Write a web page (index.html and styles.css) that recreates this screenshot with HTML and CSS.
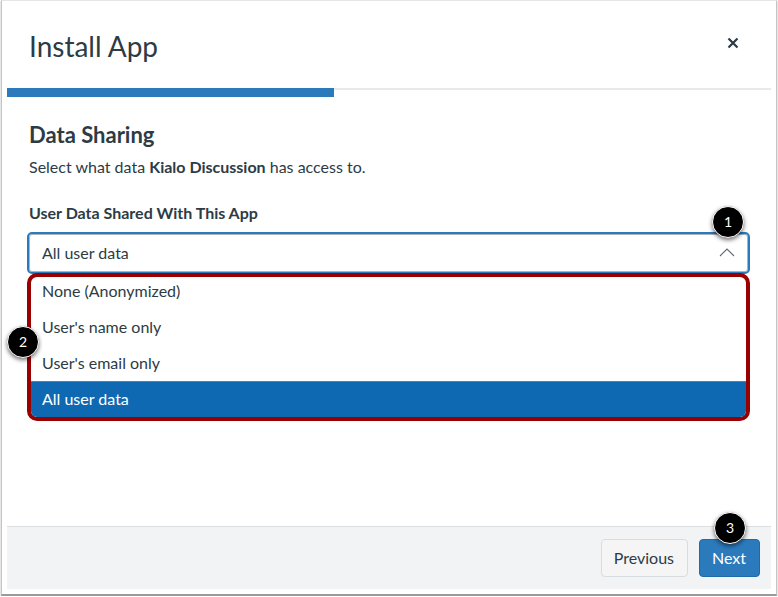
FILE: index.html
```html
<!DOCTYPE html>
<html lang="en">
<head>
    <meta charset="UTF-8">
    <title>Install App</title>
    <link rel="stylesheet" href="styles.css">
</head>
<body>
    <div class="frame">
        <header class="modal-header">
            <h1>Install App</h1>
            <button class="close-btn" aria-label="Close">
                <svg width="12" height="12" viewBox="0 0 12 12"><path d="M1.5 1.5l9 9M10.5 1.5l-9 9" stroke="#2d3b45" stroke-width="2.2" fill="none"/></svg>
            </button>
        </header>
        <div class="progress"><div class="progress-fill"></div></div>

        <main class="content">
            <h2>Data Sharing</h2>
            <p class="intro">Select what data <strong>Kialo Discussion</strong> has access to.</p>
            <label class="field-label">User Data Shared With This App</label>
            <div class="select-box">
                <span>All user data</span>
                <svg width="16" height="9" viewBox="0 0 16 9"><path d="M1 8l7-7 7 7" stroke="#5b6b78" stroke-width="1.1" fill="none"/></svg>
                <span class="badge badge-one">1</span>
            </div>
            <div class="options-wrap">
                <ul class="options">
                    <li>None (Anonymized)</li>
                    <li>User's name only</li>
                    <li>User's email only</li>
                    <li class="selected">All user data</li>
                </ul>
                <span class="badge badge-two">2</span>
            </div>
        </main>

        <footer class="modal-footer">
            <button class="btn">Previous</button>
            <button class="btn btn-primary">Next<span class="badge badge-three">3</span></button>
        </footer>
    </div>
</body>
</html>
```

FILE: styles.css
```css
html, body {
    margin: 0;
    padding: 0;
    background-color: #fff;
}
body {
    font-family: Lato, 'Open Sans', sans-serif;
    color: #2d3b45;
}
.frame {
    box-sizing: border-box;
    width: 776px;
    height: 596px;
    margin-left: 1px;
    padding: 0 5px 5px 5px;
    display: flex;
    flex-direction: column;
    background-color: #fff;
    border: 1px solid #c4c4c4;
    border-top: 1px solid #e6e6e6;
    border-bottom: 2px solid #9a9a9a;
    box-shadow: 0 1px 2px rgba(0, 0, 0, 0.3);
}
.modal-header {
    height: 87px;
    display: flex;
    justify-content: space-between;
    align-items: center;
    padding: 0 32px 0 22px;
    flex-shrink: 0;
}
.modal-header h1 {
    margin: 2px 0 0 0;
    font-size: 28px;
    font-weight: 400;
    line-height: 34px;
}
.close-btn {
    background: none;
    border: none;
    padding: 0;
    display: flex;
    margin-bottom: 4px;
}
.progress {
    height: 9px;
    flex-shrink: 0;
    background: linear-gradient(#e8e9ea 2px, #fff 2px);
}
.progress-fill {
    width: 327px;
    height: 9px;
    background-color: #2b7abc;
}
.content {
    flex: 1;
    padding: 25px 22px 0 20px;
}
.content h2 {
    margin: 0 0 9px 2px;
    font-size: 22px;
    font-weight: 700;
    line-height: 26px;
}
.intro {
    margin: 0 0 26px 2px;
    font-size: 16px;
    line-height: 20px;
}
.field-label {
    display: block;
    margin: 0 0 9px 2px;
    font-size: 16px;
    font-weight: 700;
    line-height: 20px;
}
.select-box {
    box-sizing: border-box;
    position: relative;
    height: 42px;
    margin-right: -1px;
    display: flex;
    justify-content: space-between;
    align-items: center;
    padding: 0 13px 2px 13px;
    font-size: 16px;
    background-color: #fff;
    border: 2px solid #2b7abc;
    border-radius: 5px;
    box-shadow: inset 0 0 0 1px #a9b4bc;
}
.options-wrap {
    position: relative;
    margin: -1px -1px 0 0;
}
.options {
    list-style: none;
    margin: 0;
    padding: 0;
    border: 4px solid #990000;
    border-radius: 10px;
    font-size: 16px;
}
.options li {
    height: 36px;
    line-height: 36px;
    padding-left: 11px;
}
.options li:first-child {
    height: 32px;
    line-height: 28px;
}
.options li.selected {
    background-color: #0f69b2;
    border-top: 1px solid #3d85bf;
    box-sizing: border-box;
    line-height: 34px;
    color: #fff;
    border-radius: 0 0 6px 6px;
}
.badge {
    position: absolute;
    box-sizing: border-box;
    width: 32px;
    height: 32px;
    border-radius: 50%;
    background-color: #000;
    border: 1px solid #fff;
    color: #fff;
    font-size: 14px;
    line-height: 30px;
    text-align: center;
    box-shadow: 0 2px 4px rgba(0, 0, 0, 0.55);
}
.badge-one {
    top: -28px;
    right: 4px;
}
.badge-two {
    top: 53px;
    left: -20px;
}
.badge-three {
    top: -28px;
    left: 14px;
}
.modal-footer {
    box-sizing: border-box;
    height: 63px;
    flex-shrink: 0;
    display: flex;
    justify-content: flex-end;
    align-items: center;
    gap: 11px;
    padding: 0 11px 0 0;
    background-color: #f2f3f4;
    border-top: 1px solid #dcdfe1;
}
.btn {
    position: relative;
    box-sizing: border-box;
    height: 38px;
    padding: 0 13px 2px 12px;
    font-family: inherit;
    font-size: 16px;
    color: #2d3b45;
    background-color: #f5f5f5;
    border: 1px solid #d9dcde;
    border-radius: 4px;
}
.btn-primary {
    color: #fff;
    background-color: #2b7abc;
    border-color: #1f6aa8;
}
```
